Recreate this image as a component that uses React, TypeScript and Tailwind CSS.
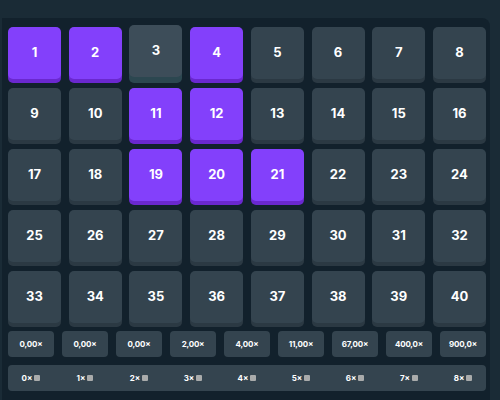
import React from "react";

const selected = new Set([1, 2, 4, 11, 12, 19, 20, 21]);
const hovered = 3;
const payouts = ["0,00×", "0,00×", "0,00×", "2,00×", "4,00×", "11,00×", "67,00×", "400,0×", "900,0×"];

function Tile({ n }: { n: number }) {
  if (selected.has(n)) {
    return (
      <div className="h-[52px] rounded-[5px] bg-[#8340fb] shadow-[0_4px_0_#6a28cf] flex items-center justify-center text-white text-[13px] font-bold">
        {n}
      </div>
    );
  }
  if (n === hovered) {
    return (
      <div className="h-[52px] -mt-[2px] rounded-[5px] bg-[#3d4d59] shadow-[0_6px_0_#2c4750] flex items-center justify-center text-white text-[13px] font-bold">
        {n}
      </div>
    );
  }
  return (
    <div className="h-[52px] rounded-[5px] bg-[#34444f] shadow-[0_4px_0_#2b3943] flex items-center justify-center text-white text-[13px] font-bold">
      {n}
    </div>
  );
}

export default function App() {
  return (
    <div
      className="w-[500px] h-[400px] bg-[#1a2b36] overflow-hidden flex flex-col"
      style={{ fontFamily: "Inter, 'Noto Sans', sans-serif" }}
    >
      <div className="h-[18px] shrink-0" />
      <div className="ml-[2px] w-[488px] flex-1 bg-[#12212c] rounded-tr-lg pl-[6px] pr-[4px] pt-[9px]">
        <div className="grid grid-cols-8 gap-x-[7.7px] gap-y-[9px]">
          {Array.from({ length: 40 }, (_, i) => (
            <Tile key={i} n={i + 1} />
          ))}
        </div>
        <div className="grid grid-cols-9 gap-x-[8px] mt-[8px]">
          {payouts.map((p, i) => (
            <div
              key={i}
              className="h-[26px] rounded-[4px] bg-[#34444f] flex items-center justify-center text-white text-[8px] font-bold tracking-[-0.2px]"
            >
              {p}
            </div>
          ))}
        </div>
        <div className="mt-[8px] h-[26px] rounded-[4px] bg-[#34444f] grid grid-cols-9 gap-x-[8px]">
          {payouts.map((_, i) => (
            <div key={i} className="flex items-center justify-center gap-[2px] text-white text-[8px] font-bold">
              <span>{i}×</span>
              <span className="w-[6px] h-[6px] rounded-[1px] bg-[#a9abab]" />
            </div>
          ))}
        </div>
      </div>
    </div>
  );
}
